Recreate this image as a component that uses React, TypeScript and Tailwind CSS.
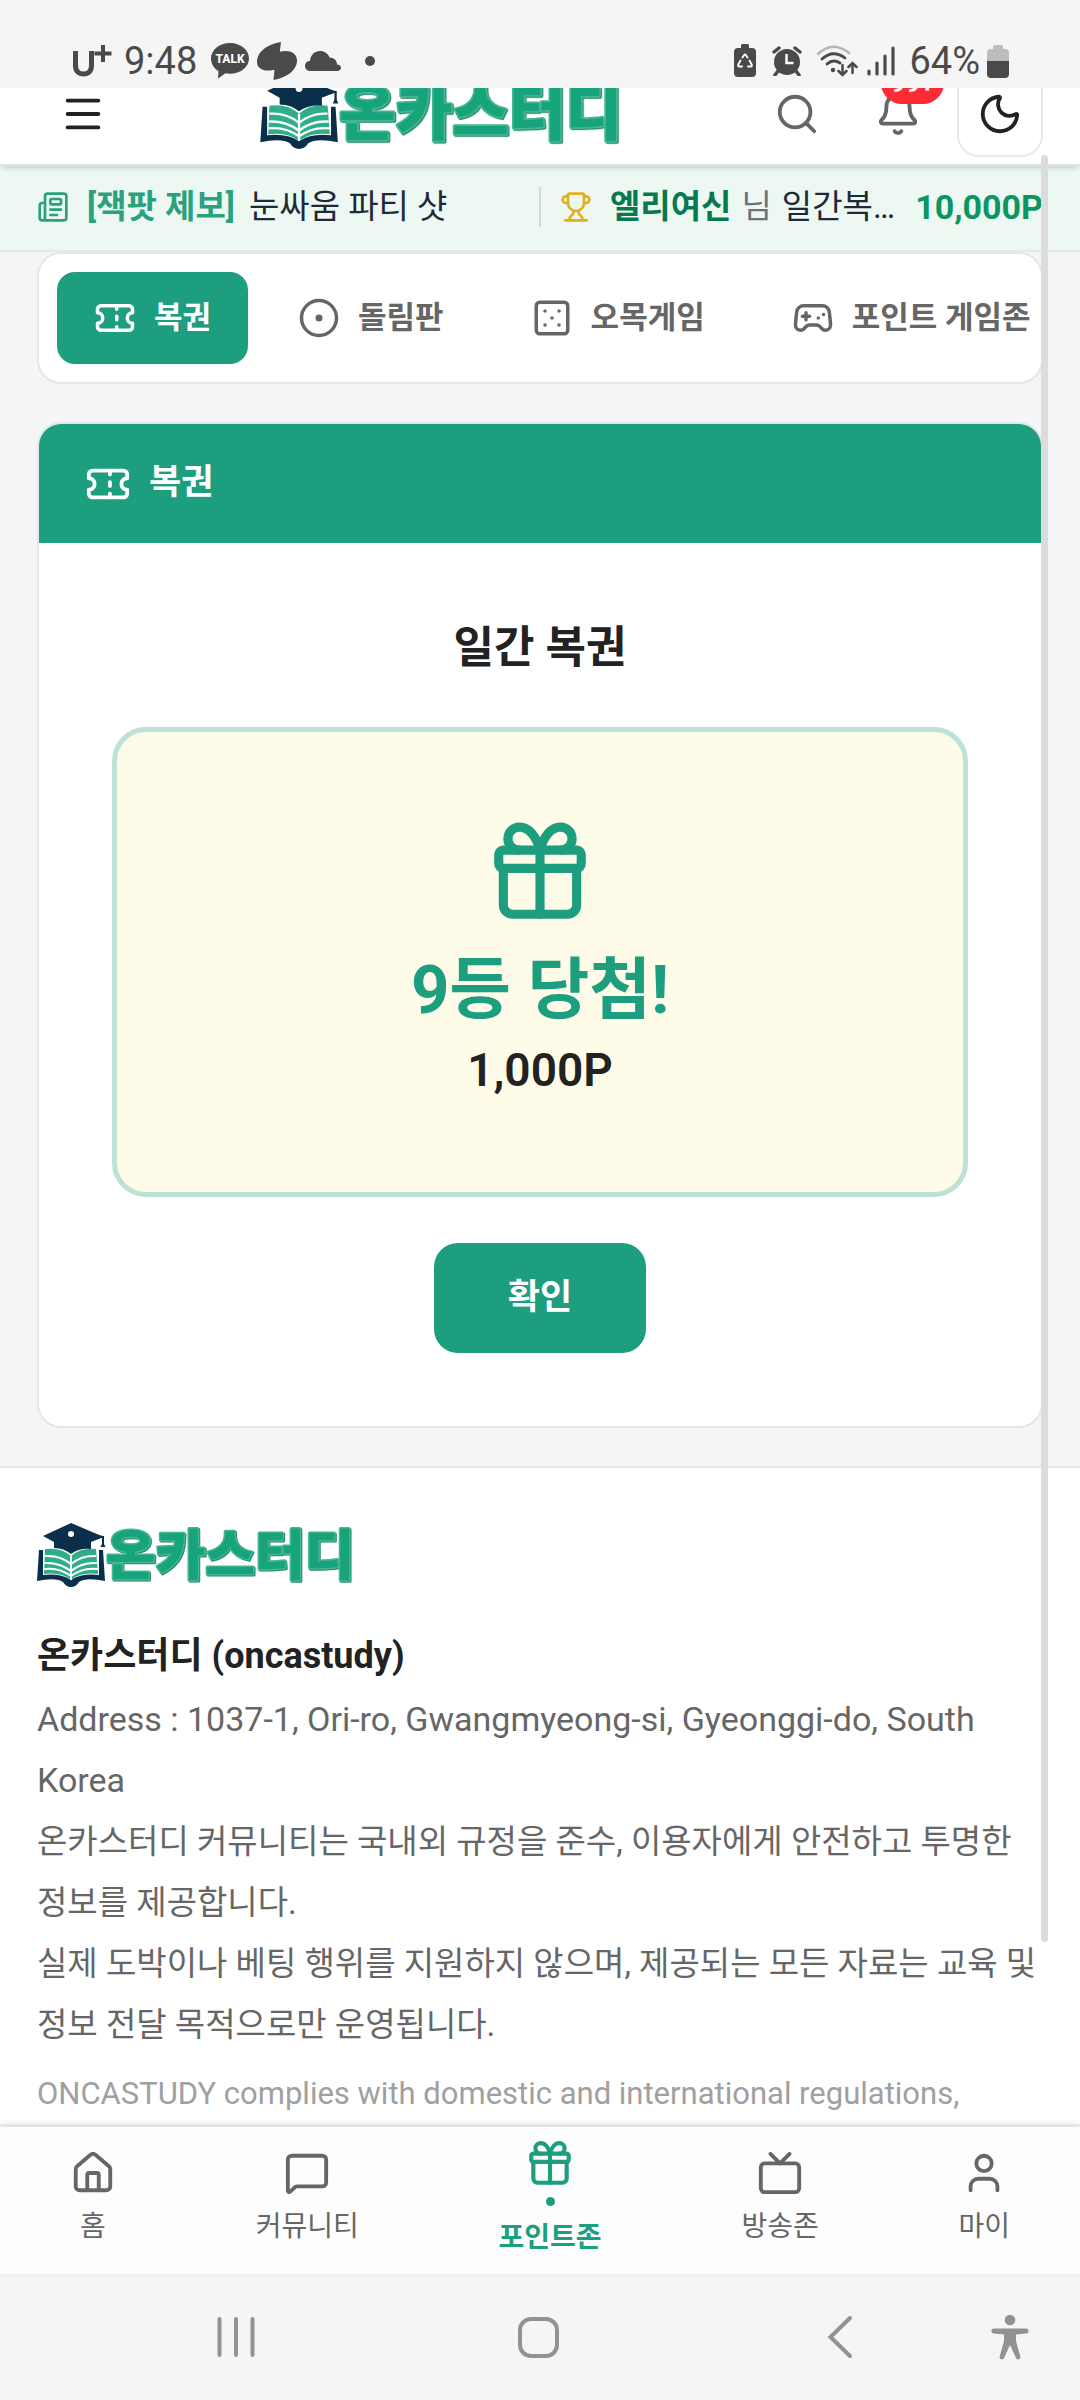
import React, { useState } from "react";
import {
  Bell,
  CircleDot,
  Dice5,
  Gamepad2,
  House,
  Menu,
  MessageSquare,
  Moon,
  Newspaper,
  Search,
  Ticket,
  Trophy,
  Tv,
  User,
} from "lucide-react";

function Gift({ size, className }: { size: number; className?: string }) {
  return (
    <svg
      viewBox="0 0 24 24"
      width={size}
      height={size}
      className={className}
      fill="none"
      stroke="currentColor"
      strokeWidth="2"
      strokeLinecap="round"
      strokeLinejoin="round"
      aria-hidden="true"
    >
      <path d="M12 7v14" />
      <path d="M20 11v8a2 2 0 0 1-2 2H6a2 2 0 0 1-2-2v-8" />
      <path d="M7.500 7a1 1 0 0 1 0-5A4.800 8 0 0 1 12 7a4.800 8 0 0 1 4.500-5 1 1 0 0 1 0 5" />
      <rect x="3" y="7" width="18" height="4" rx="1" />
    </svg>
  );
}

function CarrierMark() {
  return (
    <svg viewBox="0 0 40 32" className="h-8 w-10" fill="none" stroke="#4a4a4a" role="img" aria-label="U+">
      <path d="M3.500 6v14.500c0 5.500 3 8.500 8 8.500s8-3 8-8.500V6" strokeWidth="5" />
      <path d="M31 0v17M22.500 8.500h17" strokeWidth="4" />
    </svg>
  );
}

function StatusBar() {
  return (
    <div className="flex h-[88px] shrink-0 items-center justify-between bg-[#f5f5f5] pt-[38px] pr-[71px] pb-1 pl-[72px] text-[38px] leading-none text-[#4a4a4a]">
      <div className="flex items-center">
        <CarrierMark />
        <span className="ml-3">9:48</span>
        <svg viewBox="0 0 38 36" className="ml-[14px] h-9 w-[38px]" role="img" aria-label="TALK">
          <path d="M19 0C8.500 0 0 6.800 0 15.500c0 5.300 3 9.800 7.500 12.500L7 35.500l7.500-5.200c1.500.3 3 .5 4.500.5 10.500 0 19-6.800 19-15.300S29.500 0 19 0Z" fill="#4a4a4a" />
          <text x="19" y="20" textAnchor="middle" fontSize="12" fontWeight="800" fill="#fff">TALK</text>
        </svg>
        <svg viewBox="0 0 40 38" className="ml-2 h-[38px] w-10" fill="#4a4a4a">
          <path d="M24 0C11 2 0 9.500 0 20c0 6 5.500 9 12 8.500 2-.1 3.500-.3 5.500-.8L16.500 38C29 36 40 28.500 40 18.500 40 12 34.500 8.700 28 9c-2 .1-3.500.4-5.200.8L24 0Z" />
        </svg>
        <svg viewBox="0 0 36 22" className="ml-2 h-[22px] w-9" fill="#4a4a4a">
          <path d="M6 21c-3.500 0-6-2-6-5s2.200-5 5-5C5.500 5 9.500 1 15 1c4.500 0 8 2.500 9.500 6.500C29 7.500 32 10.500 32 14.500c2.500.2 4 1.500 4 3.300S34.500 21 32 21H6Z" />
        </svg>
        <span className="ml-6 size-[10px] rounded-full bg-[#4a4a4a]" />
      </div>
      <div className="flex items-center">
        <svg viewBox="0 0 22 34" className="h-[34px] w-[22px]">
          <path d="M7 1.500Q7 0 8.500 0h5Q15 0 15 1.500V4h3q4 0 4 4v21q0 4-4 4H4q-4 0-4-4V8q0-4 4-4h3V1.500Z" fill="#4a4a4a" />
          <path d="m8.500 13.500 1.500-2.300q1-1.400 2 0l1.500 2.300M15.500 16.500l2.200 4q.8 2-1.200 2H14M8 22.500H5.500q-2 0-1.200-2l2.200-4" fill="none" stroke="#fff" strokeWidth="1.800" strokeLinecap="round" />
        </svg>
        <svg viewBox="0 0 30 30" className="ml-4 h-[30px] w-[30px]">
          <circle cx="15" cy="16" r="13" fill="#4a4a4a" />
          <path d="m2 6 5-4M28 6l-5-4M6 25l-3 4M24 25l3 4" stroke="#4a4a4a" strokeWidth="3.500" strokeLinecap="round" />
          <path d="M14.500 8v9h7" fill="none" stroke="#fff" strokeWidth="2.500" />
        </svg>
        <svg viewBox="0 0 42 34" className="ml-[14px] h-[34px] w-[42px]" fill="none" stroke="#4a4a4a" strokeLinecap="round">
          <path d="M2 10Q17-4 33 9" stroke="#b4b4b4" strokeWidth="2.500" />
          <path d="M6 15Q17 5 29 14M11 20Q17 14.500 24 19" strokeWidth="2.800" />
          <circle cx="17" cy="26" r="2.200" fill="#4a4a4a" stroke="none" />
          <path d="M26.500 21v10m-4-4 4 4 4-4M36.500 29V19m-4 4 4-4 4 4" strokeWidth="2.500" />
        </svg>
        <svg viewBox="0 0 28 30" className="ml-[9px] h-[30px] w-7" stroke="#4a4a4a" strokeWidth="3.200" strokeLinecap="round">
          <path d="M2 25v3M10 17v11M18 10v18M26 2v26" />
        </svg>
        <span className="ml-[14px]">64%</span>
        <svg viewBox="0 0 22 33" className="ml-[7px] h-[33px] w-[22px]">
          <path d="M6 1.500Q6 0 7.500 0h7Q16 0 16 1.500V4h2q4 0 4 4v9H0V8q0-4 4-4h2V1.500Z" fill="#bdbdbd" />
          <path d="M0 16h22v13q0 4-4 4H4q-4 0-4-4V16Z" fill="#4a4a4a" />
        </svg>
      </div>
    </div>
  );
}

function Logo({ className }: { className: string }) {
  return (
    <svg viewBox="0 0 316 64" className={className} role="img" aria-label="온카스터디">
      <path d="M2 27 6 27v25q17-2 28 5 11-7 28-5V27l4 0 2 31q-19-4-26 1-3 5-8 5t-8-5q-7-5-26-1Z" fill="#0b2f4a" />
      <path d="M8 26q16-2 26 7 10-9 25-7l2 25q-17-2-27 6-10-8-27-6Z" fill="#2fae8c" />
      <path d="M34 33v24M8 33q15-1 26 8 11-9 25-8M7 40q15-1 27 8 11-9 26-8M7 46q15-2 27 7 12-9 27-7" fill="none" stroke="#fff" strokeWidth="2" />
      <path d="M34 0 67 14 54 19v7q-12-1-20 5-7-6-17-6v-6L6 13Z" fill="#0b2f4a" />
      <path d="m34 11 32 3v8" fill="none" stroke="#0b2f4a" strokeWidth="2" />
      <path d="m66 19 2.500 5h-5Z" fill="#0b2f4a" />
      <circle cx="34" cy="11" r="3" fill="#fff" />
      <text
        x="69"
        y="52"
        fontFamily="'Noto Sans CJK KR', sans-serif"
        fontSize="54"
        fontWeight="900"
        strokeLinejoin="round"
        fill="#17a47d"
        stroke="#45b790"
        strokeWidth="3"
        paintOrder="stroke"
        className="drop-shadow-[1px_1px_0_#2b8a6c]"
      >
        온카스터디
      </text>
    </svg>
  );
}

function Header() {
  return (
    <header className="relative z-10 h-[78px] shrink-0 border-b-2 border-[#dfe3e2] bg-white shadow-md">
      <div className="flex h-full items-end justify-between overflow-hidden pr-[37px] pb-[7px] pl-[60px]">
        <button type="button" aria-label="메뉴" className="mb-5 text-[#222]">
          <Menu size={46} />
        </button>
        <Logo className="mb-2 h-[73px] w-[361px] shrink-0" />
        <div className="flex items-end">
          <button type="button" aria-label="검색" className="mb-5 text-[#666]">
            <Search size={46} />
          </button>
          <button type="button" aria-label="알림" className="relative mb-5 ml-[55px] text-[#666]">
            <Bell size={46} />
            <span className="absolute bottom-[33px] left-[6px] flex h-[42px] w-[63px] items-center justify-center rounded-full bg-[#fb2c36] text-[26px] font-bold text-white">
              99+
            </span>
          </button>
          <button
            type="button"
            aria-label="다크 모드"
            className="ml-9 flex size-[86px] items-center justify-center rounded-[22px] border-2 border-[#e8e8e8] text-[#222]"
          >
            <Moon size={46} />
          </button>
        </div>
      </div>
    </header>
  );
}

function Ticker() {
  return (
    <div className="flex h-[86px] shrink-0 items-center border-b-2 border-[#e4e9e7] bg-[#edf8f2] px-[37px] pb-[2px] text-[33px] leading-10 whitespace-nowrap">
      <a href="#jackpot" className="flex w-[502px] shrink-0 items-center text-[#1f2937]">
        <Newspaper size={32} className="mr-[18px]" color="#2aa17f" />
        <b className="mr-[14px] font-bold text-[#2aa17f]">[잭팟 제보]</b>
        <span>눈싸움 파티 샷</span>
      </a>
      <a href="#winner" className="flex min-w-0 flex-1 items-center border-l-2 border-[#d1d8d5] pl-[19px] text-[#1f2937]">
        <Trophy size={32} className="mr-[18px] shrink-0" color="#e2b01f" />
        <b className="font-bold text-[#08784f]">엘리여신</b>
        <span className="ml-[10px] text-[#6b7280]">님</span>
        <span className="ml-[10px]">일간복…</span>
        <b className="ml-auto text-[34px] font-bold text-[#0a9562]">10,000P</b>
      </a>
    </div>
  );
}

const tabs = [
  { label: "복권", Icon: Ticket },
  { label: "돌림판", Icon: CircleDot },
  { label: "오목게임", Icon: Dice5 },
  { label: "포인트 게임존", Icon: Gamepad2 },
];

function Tabs() {
  const [active, setActive] = useState("복권");
  return (
    <nav className="flex gap-[13px] overflow-hidden rounded-[24px] border-2 border-[#e5e7e8] bg-white p-[18px]">
      {tabs.map(({ label, Icon }) => (
        <button
          key={label}
          type="button"
          aria-pressed={active === label}
          onClick={() => setActive(label)}
          className={
            active === label
              ? "flex h-[92px] shrink-0 items-center gap-[18px] rounded-[18px] bg-[#1d9e7f] px-[37px] text-[31px] font-bold text-white"
              : "flex h-[92px] shrink-0 items-center gap-[18px] rounded-[18px] px-[37px] text-[31px] font-bold text-[#666]"
          }
        >
          <Icon size={42} />
          {label}
        </button>
      ))}
    </nav>
  );
}

function LotteryCard() {
  return (
    <section className="mt-[38px] overflow-hidden rounded-[24px] border-2 border-[#e5e7e8] bg-white">
      <h2 className="flex h-[119px] items-center gap-[18px] bg-[#1d9e7f] px-[46px] text-[35px] font-bold text-white">
        <Ticket size={46} />
        복권
      </h2>
      <div className="flex flex-col items-center p-[73px]">
        <h3 className="text-[44px] leading-[64px] font-bold text-[#222]">일간 복권</h3>
        <div className="mt-[47px] flex w-full flex-col items-center rounded-[34px] border-[5px] border-[#bbe2d5] bg-[#fffbe9] pt-[86px] pb-[89px]">
          <Gift size={110} className="text-[#1d9e7f]" />
          <p className="mt-[22px] text-[67px] leading-[80px] font-bold text-[#1d9e7f]">9등 당첨!</p>
          <p className="mt-2 text-[46px] leading-[65px] font-semibold text-[#222]">1,000P</p>
        </div>
        <button
          type="button"
          className="mt-[46px] h-[110px] rounded-[24px] bg-[#1d9e7f] px-[74px] text-[35px] font-bold text-white"
        >
          확인
        </button>
      </div>
    </section>
  );
}

function Footer() {
  return (
    <footer className="border-t-2 border-[#e3e6e6] bg-white px-[37px] pt-[55px] text-[33px] leading-[61px] text-[#666]">
      <Logo className="h-16 w-[316px]" />
      <p className="mt-[39px] mb-[2px] text-[36px] font-bold text-[#222]">온카스터디 (oncastudy)</p>
      <address className="text-[34px] not-italic">
        Address : 1037-1, Ori-ro, Gwangmyeong-si, Gyeonggi-do, South Korea
      </address>
      <p>
        온카스터디 커뮤니티는 국내외 규정을 준수, 이용자에게 안전하고 투명한
        <br />
        정보를 제공합니다.
      </p>
      <p className="whitespace-nowrap">
        실제 도박이나 베팅 행위를 지원하지 않으며, 제공되는 모든 자료는 교육 및
        <br />
        정보 전달 목적으로만 운영됩니다.
      </p>
      <p className="mt-2 text-[31px] text-[#a0a0a0]">ONCASTUDY complies with domestic and international regulations,</p>
    </footer>
  );
}

const navItems = [
  { label: "홈", Icon: House, active: false },
  { label: "커뮤니티", Icon: MessageSquare, active: false },
  { label: "포인트존", Icon: Gift, active: true },
  { label: "방송존", Icon: Tv, active: false },
  { label: "마이", Icon: User, active: false },
];

function BottomNav() {
  return (
    <nav className="relative flex h-[147px] shrink-0 items-center justify-around bg-[#fdfdfd] pb-1 text-[28px] leading-10 shadow-[0_-2px_8px_rgba(0,0,0,0.12)]">
      {navItems.map(({ label, Icon, active }) =>
        active ? (
          <a key={label} href="#points" aria-current="page" className="flex flex-col items-center font-bold text-[#1d9e7f]">
            <Icon size={50} />
            <span className="mt-2 mb-3 size-[9px] rounded-full bg-[#1d9e7f]" />
            {label}
          </a>
        ) : (
          <a key={label} href="#menu" className="flex flex-col items-center gap-[11px] text-[#666]">
            <Icon size={46} />
            {label}
          </a>
        ),
      )}
    </nav>
  );
}

function SystemNav() {
  return (
    <div className="grid h-[126px] shrink-0 grid-cols-[85fr_302fr_302fr_302fr_89fr] items-center justify-items-center bg-[#f5f5f5] text-[#929292]">
      <span />
      <button type="button" aria-label="최근 앱">
        <svg viewBox="0 0 42 42" className="size-[42px]" stroke="currentColor" strokeWidth="4" strokeLinecap="round">
          <path d="M4.500 3v36M21 3v36M37.500 3v36" />
        </svg>
      </button>
      <button type="button" aria-label="홈 화면" className="size-[41px] rounded-[13px] border-4 border-current" />
      <button type="button" aria-label="뒤로">
        <svg viewBox="0 0 26 44" className="h-11 w-[26px]" fill="none" stroke="currentColor" strokeWidth="4" strokeLinecap="round">
          <path d="M23 3 3.500 22 23 41" />
        </svg>
      </button>
      <button type="button" aria-label="접근성" className="justify-self-start">
        <svg viewBox="0 0 38 46" className="h-[46px] w-[38px]" fill="currentColor">
          <circle cx="19" cy="6" r="5.300" />
          <path d="M3 14.500h32a2.500 2.500 0 0 1 0 5l-10 1V27l4.300 15.500c.8 3-3.300 4-4.300 1.500l-6-13-6 13c-1 2.500-5.100 1.500-4.300-1.500L13 27v-6.500l-10-1a2.500 2.500 0 0 1 0-5Z" />
        </svg>
      </button>
    </div>
  );
}

export default function App() {
  return (
    <div className="relative flex h-screen flex-col overflow-hidden bg-[#f4f5f7] font-[Roboto,'Noto_Sans_CJK_KR',sans-serif]">
      <StatusBar />
      <Header />
      <Ticker />
      <div className="min-h-0 flex-1 overflow-hidden">
        <main className="px-[37px] pb-[38px]">
          <Tabs />
          <LotteryCard />
        </main>
        <Footer />
      </div>
      <div className="absolute top-[155px] right-8 z-20 h-[1787px] w-[7px] rounded-full bg-[#dcdcdd]" />
      <BottomNav />
      <SystemNav />
    </div>
  );
}
